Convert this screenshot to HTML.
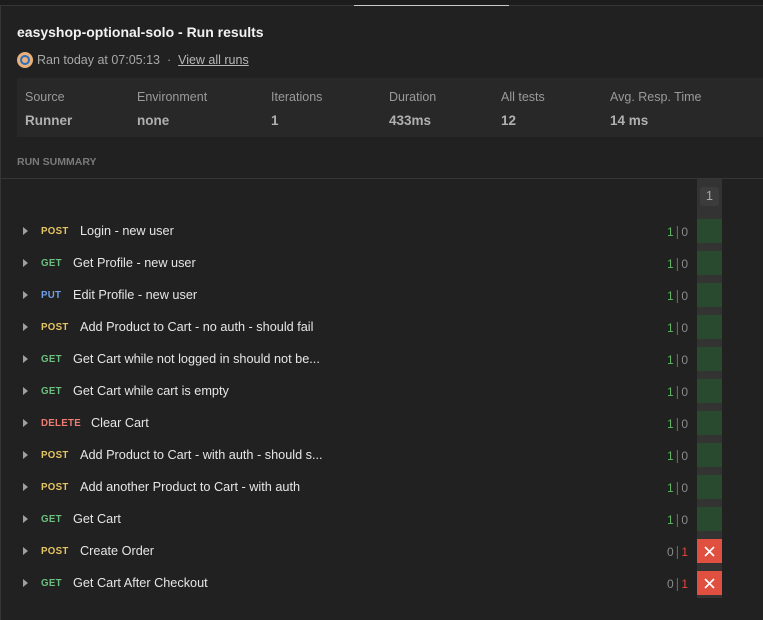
<!DOCTYPE html>
<html><head><meta charset="utf-8"><style>
*{margin:0;padding:0;box-sizing:border-box}
body{width:763px;height:620px;background:#212121;font-family:"Liberation Sans",sans-serif;position:relative;overflow:hidden;color:#e0e0e0}
.a{position:absolute}
.row{position:absolute;left:0;width:697px;height:32px;display:flex;align-items:center;font-size:12.7px;color:#e6e6e6}
.tri{position:absolute;left:23px;top:12px;width:0;height:0;border-left:5px solid #a0a0a0;border-top:4px solid transparent;border-bottom:4px solid transparent}
.m{position:absolute;left:41px;font-size:9.7px;font-weight:bold;letter-spacing:.3px}
.post{color:#e5c561}.get{color:#6bbf80}.put{color:#6f9fe8}.del{color:#ee7d72}
.cnt{position:absolute;right:9px;font-size:12px;color:#8a8a8a}
.cnt .g{color:#5fb462}.cnt .r{color:#e8453a}.cnt .s{color:#666;margin:0 2px;font-size:14px}
.cell{position:absolute;left:697px;width:25px;height:24px;background:#2a4a2f}
.x{background:#e05040}
.x svg{position:absolute;left:7px;top:7px}
</style></head><body>
<div class="a" style="left:0;top:0;width:763px;height:5px;background:#1c1c1c"></div>
<div class="a" style="left:0;top:5px;width:763px;height:1px;background:#363636"></div>
<div class="a" style="left:354px;top:5px;width:155px;height:1px;background:#c8c8c8"></div>
<div class="a" style="left:0;top:5px;width:1px;height:615px;background:#363636"></div>
<div class="a" style="left:17px;top:24px;font-size:14px;font-weight:bold;color:#f2f2f2">easyshop-optional-solo - Run results</div>
<div class="a" style="left:17px;top:52px;width:16px;height:16px;border-radius:50%;background:#e8b07a"></div>
<div class="a" style="left:20px;top:55px;width:10px;height:10px;border-radius:50%;border:2px solid #2a6fbf"></div>
<div class="a" style="left:37px;top:53px;font-size:12.5px;color:#a8a8a8">Ran today at 07:05:13 &nbsp;·&nbsp; <span style="text-decoration:underline;color:#b8b8b8">View all runs</span></div>
<div class="a" style="left:17px;top:78px;width:746px;height:59px;background:#282828"></div>
<div class="a" style="top:90px;left:0;font-size:12.5px;color:#9a9a9a;width:763px;height:14px">
<span class="a" style="left:25px">Source</span><span class="a" style="left:137px">Environment</span><span class="a" style="left:271px">Iterations</span><span class="a" style="left:389px">Duration</span><span class="a" style="left:501px">All tests</span><span class="a" style="left:610px">Avg. Resp. Time</span></div>
<div class="a" style="top:113px;left:0;font-size:13.5px;font-weight:bold;color:#b0b0b0;width:763px;height:16px">
<span class="a" style="left:25px">Runner</span><span class="a" style="left:137px">none</span><span class="a" style="left:271px">1</span><span class="a" style="left:389px">433ms</span><span class="a" style="left:501px">12</span><span class="a" style="left:610px">14 ms</span></div>
<div class="a" style="left:17px;top:156px;font-size:10.5px;font-weight:bold;color:#7a7a7a">RUN SUMMARY</div>
<div class="a" style="left:1px;top:178px;width:762px;height:1px;background:#363636"></div>
<div class="a" style="left:697px;top:179px;width:25px;height:419px;background:#333"></div>
<div class="a" style="left:700px;top:187px;width:19px;height:19px;background:#3c3c3c;border-radius:3px;color:#aaa;font-size:12.5px;text-align:center;line-height:19px">1</div>

<div class="row" style="top:215px"><i class="tri"></i><span class="m post">POST</span><span style="margin-left:80px">Login - new user</span><span class="cnt"><span class="g">1</span><span class="s">|</span>0</span></div>
<div class="row" style="top:247px"><i class="tri"></i><span class="m get">GET</span><span style="margin-left:73px">Get Profile - new user</span><span class="cnt"><span class="g">1</span><span class="s">|</span>0</span></div>
<div class="row" style="top:279px"><i class="tri"></i><span class="m put">PUT</span><span style="margin-left:73px">Edit Profile - new user</span><span class="cnt"><span class="g">1</span><span class="s">|</span>0</span></div>
<div class="row" style="top:311px"><i class="tri"></i><span class="m post">POST</span><span style="margin-left:80px">Add Product to Cart - no auth - should fail</span><span class="cnt"><span class="g">1</span><span class="s">|</span>0</span></div>
<div class="row" style="top:343px"><i class="tri"></i><span class="m get">GET</span><span style="margin-left:73px">Get Cart while not logged in should not be...</span><span class="cnt"><span class="g">1</span><span class="s">|</span>0</span></div>
<div class="row" style="top:375px"><i class="tri"></i><span class="m get">GET</span><span style="margin-left:73px">Get Cart while cart is empty</span><span class="cnt"><span class="g">1</span><span class="s">|</span>0</span></div>
<div class="row" style="top:407px"><i class="tri"></i><span class="m del">DELETE</span><span style="margin-left:91px">Clear Cart</span><span class="cnt"><span class="g">1</span><span class="s">|</span>0</span></div>
<div class="row" style="top:439px"><i class="tri"></i><span class="m post">POST</span><span style="margin-left:80px">Add Product to Cart - with auth - should s...</span><span class="cnt"><span class="g">1</span><span class="s">|</span>0</span></div>
<div class="row" style="top:471px"><i class="tri"></i><span class="m post">POST</span><span style="margin-left:80px">Add another Product to Cart - with auth</span><span class="cnt"><span class="g">1</span><span class="s">|</span>0</span></div>
<div class="row" style="top:503px"><i class="tri"></i><span class="m get">GET</span><span style="margin-left:73px">Get Cart</span><span class="cnt"><span class="g">1</span><span class="s">|</span>0</span></div>
<div class="row" style="top:535px"><i class="tri"></i><span class="m post">POST</span><span style="margin-left:80px">Create Order</span><span class="cnt">0<span class="s">|</span><span class="r">1</span></span></div>
<div class="row" style="top:567px"><i class="tri"></i><span class="m get">GET</span><span style="margin-left:73px">Get Cart After Checkout</span><span class="cnt">0<span class="s">|</span><span class="r">1</span></span></div>

<div class="cell" style="top:219px"></div><div class="cell" style="top:251px"></div><div class="cell" style="top:283px"></div><div class="cell" style="top:315px"></div><div class="cell" style="top:347px"></div><div class="cell" style="top:379px"></div><div class="cell" style="top:411px"></div><div class="cell" style="top:443px"></div><div class="cell" style="top:475px"></div><div class="cell" style="top:507px"></div>
<div class="cell x" style="top:539px"><svg width="11" height="11" viewBox="0 0 11 11"><path d="M1 1L10 10M10 1L1 10" stroke="#fff" stroke-width="1.6"/></svg></div>
<div class="cell x" style="top:571px"><svg width="11" height="11" viewBox="0 0 11 11"><path d="M1 1L10 10M10 1L1 10" stroke="#fff" stroke-width="1.6"/></svg></div>
</body></html>
